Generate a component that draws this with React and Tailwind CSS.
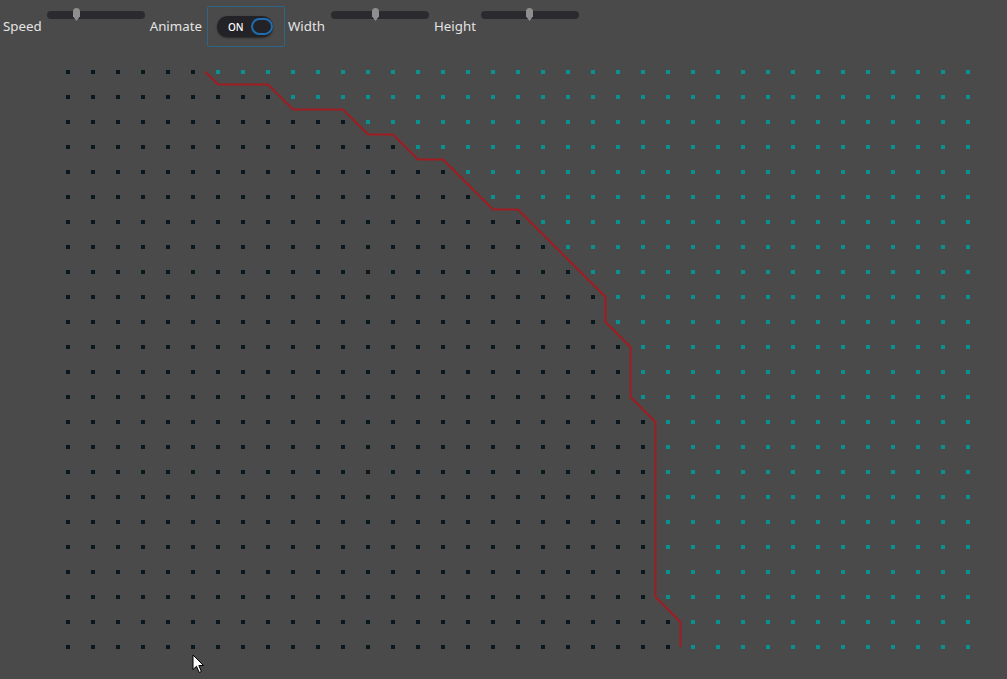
import React from 'react';

const COLS = 37;
const ROWS = 24;
// first teal column of every row
const tealStart = [6, 9, 12, 14, 16, 17, 19, 20, 21, 22, 22, 23, 23, 23, 24, 24, 24, 24, 24, 24, 24, 24, 25, 25];

const path = [
    [205.5, 72], [218, 84.5], [268, 84.5], [293, 109.5], [343, 109.5], [368, 134.5],
    [393, 134.5], [418, 159.5], [443, 159.5], [468, 184.5], [493, 209.5], [518, 209.5],
    [543, 234.5], [568, 259.5], [593, 284.5], [605.5, 297], [605.5, 322], [630.5, 347],
    [630.5, 397], [655.5, 422], [655.5, 597], [680.5, 622], [680.5, 647],
];

const Slider = ({ value, className = '' }) => (
    <div className={`relative mt-[11px] h-2 w-[98px] shrink-0 rounded-full bg-[#2a2a2f] ${className}`}>
        <svg
            width="7"
            height="13"
            viewBox="0 0 7 13"
            className="absolute top-[-3px]"
            style={{ left: `${value * 98 - 3.5}px` }}
        >
            <path d="M3.5 0C5.8 0 7 1.4 7 3.5L7 8.2L3.5 13L0 8.2L0 3.5C0 1.4 1.2 0 3.5 0Z" fill="#8e8e8e" />
        </svg>
    </div>
);

const Label = ({ children, className = '' }) => (
    <span className={`mt-[16px] block shrink-0 text-[13.3px] leading-[20px] text-[#e4e4e4] ${className}`}>{children}</span>
);

const Toggle = () => (
    <div className="ml-[5px] mt-[6px] flex h-[41px] w-[78px] shrink-0 items-center rounded-[2px] border border-[#2c6586] pl-[9px]">
        <div className="flex h-[21px] w-[56px] items-center rounded-full bg-[#232327] pl-[11px] shadow-[0_1px_2px_rgba(0,0,0,0.5)]">
            <span className="text-[10px] font-medium leading-none text-white">ON</span>
            <span className="ml-[7px] h-[17px] w-[23px] rounded-full border-2 border-[#1f6db0]" />
        </div>
    </div>
);

export default function App() {
    const dots = [];
    for (let j = 0; j < ROWS; j++) {
        for (let i = 0; i < COLS; i++) {
            dots.push(
                <rect
                    key={`${i}-${j}`}
                    x={66 + 25 * i}
                    y={70 + 25 * j}
                    width="4"
                    height="4"
                    fill={i >= tealStart[j] ? '#0b9090' : '#09171f'}
                />
            );
        }
    }

    return (
        <div className="relative h-[679px] w-[1007px] overflow-hidden bg-[#4a4a4a] font-['Noto_Sans',sans-serif]">
            <div className="flex h-[50px] items-start pl-[3px]">
                <Label>Speed</Label>
                <Slider value={0.3} className="ml-[5px]" />
                <Label className="ml-[5px]">Animate</Label>
                <Toggle />
                <Label className="ml-[3px]">Width</Label>
                <Slider value={0.45} className="ml-[6px]" />
                <Label className="ml-[5px]">Height</Label>
                <Slider value={0.5} className="ml-[5px]" />
            </div>

            <svg width="1007" height="629" viewBox="0 50 1007 629" className="block">
                {dots}
                <polyline
                    points={path.map(p => p.join(',')).join(' ')}
                    fill="none"
                    stroke="#a01c21"
                    strokeWidth="2"
                    strokeLinejoin="miter"
                />
            </svg>

            {/* mouse pointer */}
            <svg width="13" height="20" viewBox="0 0 13 20" className="absolute left-[192px] top-[654px]">
                <path d="M1 1L1 15.5L4.5 12.3L7.2 18.5L9.4 17.5L6.8 11.5L11.5 11.5Z" fill="white" stroke="black" strokeWidth="1" strokeLinejoin="round" />
            </svg>
        </div>
    );
}
